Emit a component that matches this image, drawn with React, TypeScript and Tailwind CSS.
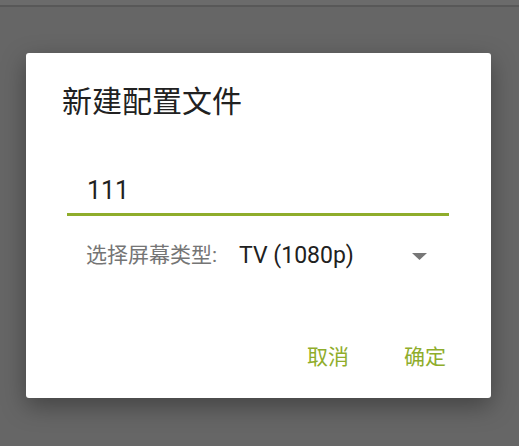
export default function App() {
  return (
    <div className="w-[519px] h-[446px] bg-[#666666] flex flex-col overflow-hidden" style={{ fontFamily: 'Roboto, "Noto Sans CJK SC", sans-serif' }}>
      <div className="h-[5px] bg-[#6b6b6b]" />
      <div className="h-[2px] bg-[#585858]" />
      <div className="pl-[26px] pt-[46px]">
        <div className="w-[465px] h-[345px] bg-white rounded-[3px] shadow-[0_8px_24px_rgba(0,0,0,0.35)] flex flex-col">
          <div className="pl-[36px] pt-[29px] text-[30px] leading-[40px] text-[#212121]">新建配置文件</div>
          <div className="ml-[41px] mr-[42px] mt-[52px] border-b-[3px] border-[#8fad2b] pl-[20px] pb-[5px] text-[25px] leading-[34px] text-[#212121]">111</div>
          <div className="flex items-center pl-[60px] pr-[64px] mt-[20px] h-[40px]">
            <span className="text-[21px] text-[#757575]">选择屏幕类型:</span>
            <span className="ml-[22px] text-[23px] text-[#212121]">TV (1080p)</span>
            <svg className="ml-auto" width="15" height="7" viewBox="0 0 15 7"><path d="M0 0 L15 0 L7.5 7 Z" fill="#777777" /></svg>
          </div>
          <div className="flex justify-end mt-auto mb-[25px] pr-[45px] gap-[55px] text-[21px] text-[#8fad2b]">
            <span>取消</span>
            <span>确定</span>
          </div>
        </div>
      </div>
    </div>
  );
}
